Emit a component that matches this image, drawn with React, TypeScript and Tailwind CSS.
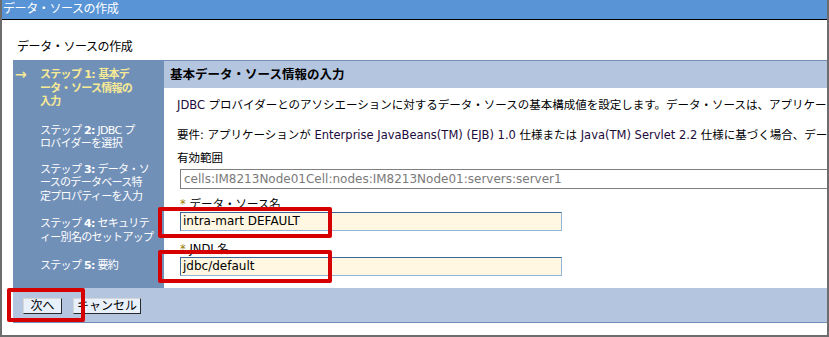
import React from "react";

const font = "font-['DejaVu_Sans','Noto_Sans_CJK_JP',sans-serif]";

function Step({ num, lines, active, className }: { num: string; lines: string[]; active?: boolean; className?: string }) {
  return (
    <div className={`flex ${className ?? ""}`}>
      <div className={`w-[27px] shrink-0 pl-[2px] text-[14px] leading-[13.5px] ${active ? "text-[#f7ea94] font-bold" : ""}`}>
        {active ? "→" : ""}
      </div>
      <div className={`leading-[13.5px] text-[11px] whitespace-nowrap tracking-[-0.7px] ${active ? "text-[#f7ea94] font-bold" : "text-white"}`}>
        {lines.map((l, i) => (
          <div key={i}>
            {i === 0 ? (
              <>
                ステップ <span className="font-bold">{num}:</span> {l}
              </>
            ) : (
              l
            )}
          </div>
        ))}
      </div>
    </div>
  );
}

export default function App() {
  return (
    <div className={`${font} text-[11.5px] text-black relative w-[829px] h-[337px] overflow-hidden bg-white border-l-2 border-r-2 border-b-2 border-[#6d6d6d]`}>
      <div className="h-[20px] bg-[#5894d6] border-b border-black text-white leading-[19px] pl-[1px] text-[12px] tracking-[-0.4px]">
        データ・ソースの作成
      </div>
      <div className="pt-[20px] pb-[6px] pl-[15px] leading-[14px] text-[12px] tracking-[-0.4px]">データ・ソースの作成</div>

      <div className="ml-[11px]">
        <div className="flex h-[228px]">
          <div className="w-[151px] shrink-0 overflow-hidden bg-[#7190b8] pt-[8px]">
            <Step num="1" active lines={["基本デ", "ータ・ソース情報の", "入力"]} />
            <Step num="2" lines={["JDBC プ", "ロバイダーを選択"]} className="mt-[15px]" />
            <Step num="3" lines={["データ・ソ", "ースのデータベース特", "定プロパティーを入力"]} className="mt-[12px]" />
            <Step num="4" lines={["セキュリテ", "ィー別名のセットアップ"]} className="mt-[14px]" />
            <Step num="5" lines={["要約"]} className="mt-[15px]" />
          </div>
          <div className="flex-1 min-w-0 overflow-hidden border-t border-[#7090b8]">
            <div className="h-[27px] bg-[#b4c6df] pl-[6px] leading-[27px] font-bold text-[12.5px] whitespace-nowrap">
              基本データ・ソース情報の入力
            </div>
            <div className="pl-[13px] pt-[10px] whitespace-nowrap">
              <div className="leading-[14px]">
                <span className="text-[#1c0a3c]">JDBC</span> プロバイダーとのアソシエーションに対するデータ・ソースの基本構成値を設定します。データ・ソースは、アプリケーション・サーバー
              </div>
              <div className="leading-[14px] mt-[16px]">
                要件: アプリケーションが <span className="text-[#1c0a3c]">Enterprise JavaBeans(TM) (EJB) 1.0</span> 仕様または{" "}
                <span className="text-[#1c0a3c]">Java(TM) Servlet 2.2</span> 仕様に基づく場合、データ・ソース
              </div>
              <div className="leading-[14px] mt-[9px]">有効範囲</div>
              <div className="ml-[3px] mt-[4px] w-[700px] h-[20px] border border-[#7f7f7f] text-[#7a7a7a] leading-[18px] pl-[3px] text-[12px]">
                cells:IM8213Node01Cell:nodes:IM8213Node01:servers:server1
              </div>
              <div className="leading-[14px] mt-[8px] ml-[3px]">
                <span className="text-[#9a7b00]">*</span> データ・ソース名
              </div>
              <div className="ml-[3px] mt-[1px] w-[382px] h-[19px] bg-[#fff7e1] border border-[#92b6da] border-t-[#3b6899] border-l-[#3b6899] leading-[17px] pl-[2px] text-[12px]">
                intra-mart DEFAULT
              </div>
              <div className="leading-[14px] mt-[11px] ml-[3px]">
                <span className="text-[#9a7b00]">*</span> JNDI 名
              </div>
              <div className="ml-[3px] mt-[1px] w-[382px] h-[19px] bg-[#fff7e1] border border-[#92b6da] border-t-[#3b6899] border-l-[#3b6899] leading-[17px] pl-[2px] text-[12px]">
                jdbc/default
              </div>
            </div>
          </div>
        </div>
        <div className="h-[35px] bg-[#b4c6df] border-b border-[#7090b8] pl-[10px] pt-[10px] flex gap-[11px]">
          <button className="w-[39px] h-[16px] bg-[#e8f0fc] border border-[#d6d6d6] border-r-[#2a2a2a] border-b-[#2a2a2a] text-[12px] leading-[14px] p-0">
            次へ
          </button>
          <button className="w-[68px] h-[16px] bg-[#e8f0fc] border border-[#d6d6d6] border-r-[#2a2a2a] border-b-[#2a2a2a] text-[12px] leading-[14px] p-0">
            キャンセル
          </button>
        </div>
      </div>

      <div className="absolute left-[156px] top-[207px] w-[174px] h-[31px] border-4 border-[#d60000] rounded-[2px]" />
      <div className="absolute left-[156px] top-[250px] w-[174px] h-[33px] border-4 border-[#d60000] rounded-[2px]" />
      <div className="absolute left-[5px] top-[288px] w-[78px] h-[34px] border-4 border-[#d60000] rounded-[2px]" />
    </div>
  );
}
